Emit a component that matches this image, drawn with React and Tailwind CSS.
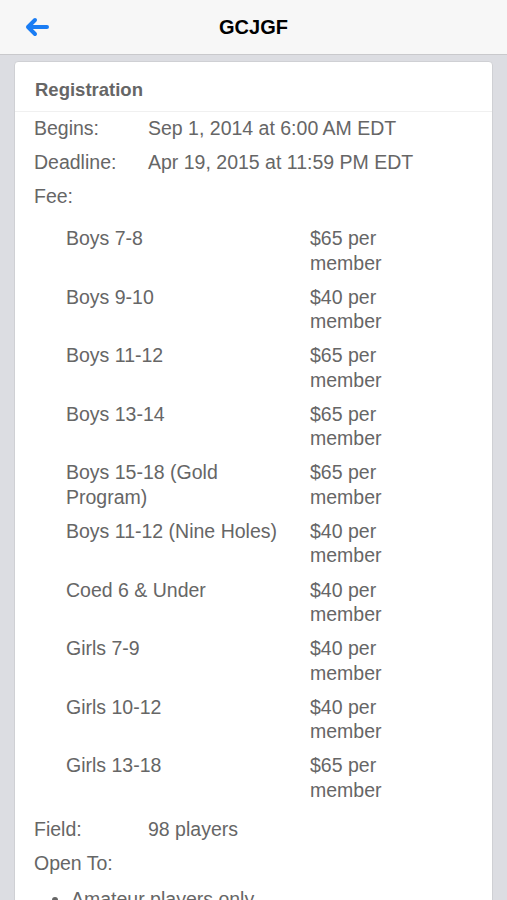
import React from 'react';

const fees = [
    ['Boys 7-8', '$65 per member'],
    ['Boys 9-10', '$40 per member'],
    ['Boys 11-12', '$65 per member'],
    ['Boys 13-14', '$65 per member'],
    ['Boys 15-18 (Gold Program)', '$65 per member'],
    ['Boys 11-12 (Nine Holes)', '$40 per member'],
    ['Coed 6 & Under', '$40 per member'],
    ['Girls 7-9', '$40 per member'],
    ['Girls 10-12', '$40 per member'],
    ['Girls 13-18', '$65 per member']
];

const Row = ({ label, children }) => (
    <div className="flex h-[34px] items-center">
        <div className="w-[114px] shrink-0">{label}</div>
        <div>{children}</div>
    </div>
);

const App = () => {
    return (
        <div
            className="h-[900px] overflow-hidden bg-[#dcdde2]"
            style={{ fontFamily: '"Liberation Sans", Arial, sans-serif' }}
        >
            {/* Nav bar */}
            <div className="relative flex h-[55px] items-center justify-center border-b border-[#c9c9cc] bg-[#f7f7f7]">
                <svg
                    className="absolute left-[24px] top-[17px]"
                    width="26"
                    height="20"
                    viewBox="0 0 26 20"
                    fill="none"
                    stroke="#1a7df4"
                    strokeWidth="4"
                    strokeLinecap="round"
                    strokeLinejoin="round"
                >
                    <path d="M23 10H4M11 3L4 10L11 17" />
                </svg>
                <div className="text-[20px] font-bold text-black">GCJGF</div>
            </div>

            {/* Card */}
            <div className="mx-[14px] mt-[6px] rounded-[4px] border border-[#cfd0d4] bg-white">
                <div className="flex h-[50px] items-center border-b border-[#f0f0f0] px-[20px] pt-[6px] text-[18.5px] font-bold text-[#666]">
                    Registration
                </div>
                <div className="px-[19px] text-[19.5px] text-[#666]">
                    <Row label="Begins:">Sep 1, 2014 at 6:00 AM EDT</Row>
                    <Row label="Deadline:">Apr 19, 2015 at 11:59 PM EDT</Row>
                    <Row label="Fee:" />
                    <div className="pb-[1px] pl-[32px] pt-[12px]">
                        {fees.map(([name, price]) => (
                            <div key={name} className="flex h-[58.6px] leading-[24.5px]">
                                <div className="w-[244px] shrink-0 pr-[20px]">{name}</div>
                                <div className="w-[84px]">{price}</div>
                            </div>
                        ))}
                    </div>
                    <Row label="Field:">98 players</Row>
                    <Row label="Open To:" />
                    <ul className="mt-[6px] list-disc pl-[37px] leading-[24px]">
                        <li>Amateur players only</li>
                    </ul>
                </div>
            </div>
        </div>
    );
};

export default App;
